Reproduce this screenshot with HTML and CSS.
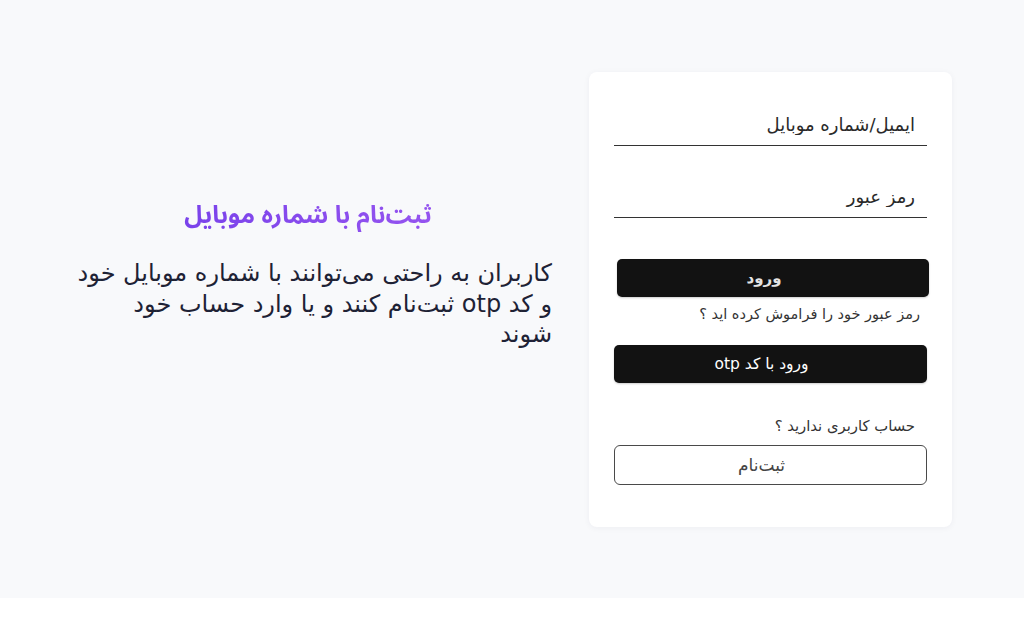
FILE: index.html
```html
<!DOCTYPE html>
<html lang="fa" dir="rtl">
<head>
<meta charset="utf-8">
<title>ورود</title>
<link rel="stylesheet" href="styles.css">
</head>
<body>
<main class="page">
  <section class="card">
    <label class="field">
      <input class="field-input" type="text" placeholder="ایمیل/شماره موبایل">
    </label>
    <label class="field field-second">
      <input class="field-input" type="password" placeholder="رمز عبور">
    </label>
    <button class="btn btn-dark btn-login" type="button">ورود</button>
    <a class="forgot" href="#">رمز عبور خود را فراموش کرده اید ؟</a>
    <button class="btn btn-dark btn-otp" type="button">ورود با کد otp</button>
    <p class="no-account">حساب کاربری ندارید ؟</p>
    <button class="btn btn-outline" type="button">ثبت‌نام</button>
  </section>
  <section class="intro">
    <h1 class="intro-title">ثبت‌نام با شماره موبایل</h1>
    <p class="intro-text">کاربران به راحتی می‌توانند با شماره موبایل خود و کد otp ثبت‌نام کنند و یا وارد حساب خود شوند</p>
  </section>
</main>
</body>
</html>
```
FILE: styles.css
```css
* { box-sizing: border-box; }
html, body { margin: 0; padding: 0; background: #ffffff; }
body {
  font-family: "DejaVu Sans", "Noto Sans", sans-serif;
  color: #222;
}
.page {
  height: 598px;
  background: #f8f9fb;
  display: flex;
  flex-direction: row;
  align-items: flex-start;
  padding: 72px 72px 0 64px;
  gap: 37px;
}
.card {
  width: 363px;
  height: 455px;
  flex: none;
  background: #ffffff;
  border-radius: 8px;
  box-shadow: 0 1px 6px rgba(30, 40, 80, 0.05);
  padding: 38px 25px 0 25px;
  display: flex;
  flex-direction: column;
}
.field { display: block; }
.field-second { margin-top: 36px; }
.field-input {
  width: 100%;
  height: 36px;
  border: none;
  border-bottom: 1.5px solid #333;
  background: transparent;
  font-family: inherit;
  font-size: 18px;
  padding: 0 12px 6px 12px;
  color: #222;
  outline: none;
}
.field-input::placeholder { color: #2a2a2a; opacity: 1; }
.btn {
  display: block;
  width: 100%;
  height: 38px;
  font-family: inherit;
  font-size: 15.5px;
  border-radius: 5px;
  padding: 0 18px 0 0;
  cursor: pointer;
}
.btn-dark {
  background: #121212;
  color: #fff;
  border: none;
  box-shadow: 0 1px 2px rgba(0,0,0,0.2);
}
.btn-login {
  margin-top: 41px;
  margin-right: -2px;
  width: 312px;
  font-weight: 700;
  letter-spacing: 1.5px;
  font-size: 15px;
  color: #e4e4e4;
}
.btn-otp { margin-top: 22px; }
.forgot {
  margin-top: 8px;
  padding-right: 7px;
  font-size: 14.5px;
  color: #333;
  text-decoration: none;
  line-height: 18px;
}
.no-account {
  margin: 34px 0 0 0;
  padding-right: 12px;
  font-size: 14.8px;
  line-height: 18px;
  color: #333;
}
.btn-outline {
  margin-top: 10px;
  height: 40px;
  background: #fff;
  color: #444;
  border: 1.5px solid #4a4a4a;
  border-radius: 6px;
  font-size: 17px;
}
.intro {
  width: 488px;
  flex: none;
  margin-top: 126px;
}
.intro-title {
  margin: 0;
  text-align: center;
  font-family: "Noto Sans Arabic", "Vazirmatn", "DejaVu Sans", sans-serif;
  font-size: 24.5px;
  line-height: 34px;
  font-weight: 700;
  color: #7c3aed;
  background: linear-gradient(90deg, #6d3ae8, #a25cf2);
  -webkit-background-clip: text;
  background-clip: text;
  -webkit-text-fill-color: transparent;
}
.intro-text {
  margin: 26px 0 0 11px;
  font-size: 24px;
  line-height: 30.5px;
  color: #1e2235;
  text-align: right;
}
```
